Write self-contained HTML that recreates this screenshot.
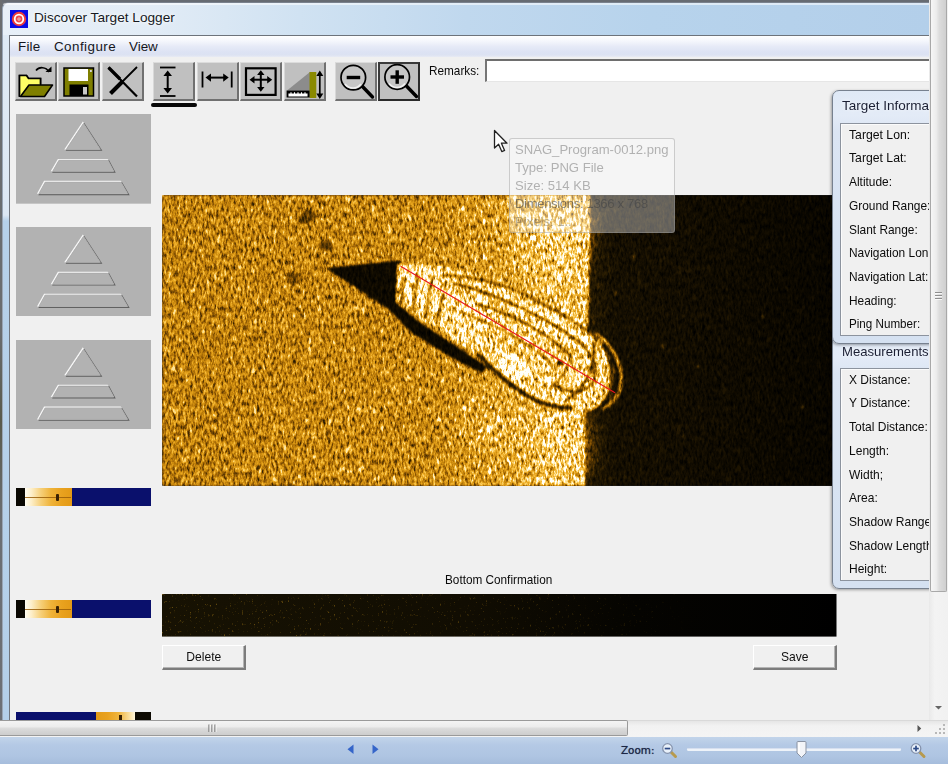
<!DOCTYPE html>
<html lang="en">
<head>
<meta charset="utf-8">
<title>Discover Target Logger</title>
<style>
html,body{margin:0;padding:0;}
body{width:948px;height:764px;overflow:hidden;position:relative;background:#f0f0f0;font-family:"Liberation Sans",sans-serif;color:#000;}
.abs{position:absolute;}
#outer-top{left:0;top:0;width:948px;height:2px;background:#666b72;}
#outer-left{left:0;top:0;width:2px;height:720px;background:linear-gradient(#6a6d70 0,#6a6d70 330px,#595a4c 420px,#6b6e72 520px,#6d7076 720px);}
#frame{left:0;top:0;width:932px;height:722px;background:#6a6f76;}
#frame2{left:2px;top:2px;width:930px;height:720px;background:#b7d1ea;border-top-left-radius:7px;border-top:1px solid #7a828e;border-left:1px solid #99a5b5;box-sizing:border-box;}
#titlebar{left:3px;top:3px;width:927px;height:32px;border-top-left-radius:6px;background:linear-gradient(90deg,#e8f0f8 0,#e2ecf6 16%,#d0e2f2 32%,#c0d8ee 50%,#b7d3ec 70%,#b3cfea 100%);}
#titlebar .hl{left:0;top:0;width:100%;height:2px;background:rgba(255,255,255,.55);border-top-left-radius:6px;}
#leftborder{left:3px;top:35px;width:6px;height:685px;background:linear-gradient(#dfeaf5 0,#dde8f4 180px,#b6d1ea 186px,#b4cfe9 100%);}
#title{left:34px;top:8px;font-size:13.65px;line-height:20px;color:#16191e;white-space:nowrap;text-shadow:0 0 6px #fff,0 0 3px rgba(255,255,255,.8);}
#client{left:9px;top:35px;width:921px;height:686px;background:#f0f0f0;border-left:1px solid #70757d;border-top:1px solid #6d737b;box-sizing:border-box;}
#menubar{left:10px;top:36px;width:920px;height:21px;background:linear-gradient(#ffffff 0,#f4f6fc 25%,#e6eaf7 50%,#dde3f4 75%,#dce2f2 90%,#e8ebf4 100%);}
.menu{top:38.4px;font-size:13.4px;line-height:18px;color:#14161c;white-space:nowrap;}
/* toolbar */
.tb{top:62px;width:42px;height:39px;background:#c0c0c0;box-sizing:border-box;border-top:1px solid #dcdcdc;border-left:1px solid #d8d8d8;border-right:2px solid #707070;border-bottom:2px solid #707070;}
.tb svg{position:absolute;left:0;top:0;}
.tb.sel{border:2px solid #2a2a2a;border-top-color:#3a3a3a;border-left-color:#3a3a3a;}
#uline{left:151px;top:103px;width:46px;height:4px;background:#080808;border-radius:2px;}
.lbl{font-size:13px;line-height:14px;white-space:nowrap;color:#0a0a0a;transform:scaleX(.905);transform-origin:0 50%;}
#remarks-in{left:485px;top:59px;width:446px;height:23px;background:#fff;box-sizing:border-box;border-top:2px solid #6e6e6e;border-left:2px solid #767676;border-bottom:1px solid #e6e6e6;}
/* thumbs */
.thumb{left:16px;width:135px;height:90px;background:#b2b2b2;}
.strip{left:16px;width:135px;height:18px;background:#0a106c;overflow:hidden;}
/* panels */
.panel{left:832px;width:110px;box-sizing:border-box;border:1px solid #77818f;border-radius:7px;background:linear-gradient(#dfe9f6 0,#e3ebf7 24px,#dbe5f3 40px,#d5e1f1 100%);box-shadow:-1px 1px 3px rgba(0,0,0,.35);}
.panel .ptitle{position:absolute;left:9px;font-size:13.5px;line-height:16px;color:#1b1f33;white-space:nowrap;text-shadow:0 0 5px #fff;}
.panel .inner{position:absolute;left:7px;right:0;background:#f0f0f0;border:1px solid #8c939e;border-right:none;box-shadow:inset 1px 1px 0 #fbfbfb;}
.panel .row{position:absolute;left:8px;font-size:13px;line-height:14px;white-space:nowrap;color:#0c0c0c;transform:scaleX(.94);transform-origin:0 50%;}
/* classic buttons */
.btn{height:25px;width:84px;box-sizing:border-box;background:#f0f0f0;border-top:1px solid #fff;border-left:1px solid #fff;border-right:2px solid #7c7c7c;border-bottom:2px solid #7c7c7c;text-align:center;font-size:13px;line-height:21px;color:#111;box-shadow:inset -1px -1px 0 #b4b4b4;}
.tiptxt{font-size:13.1px;line-height:18px;white-space:nowrap;color:rgba(120,120,120,.55);}
/* scrollbars */
#vscroll{left:929px;top:0;width:19px;height:720px;background:linear-gradient(90deg,#e9e9e9 0,#f3f3f3 30%,#f1f1f1 100%);}
#vthumb{left:930px;top:0;width:17px;height:592px;box-sizing:border-box;border:1px solid #a8a8a8;border-top:none;border-radius:0 0 2px 2px;background:linear-gradient(90deg,#f6f6f6 0,#ececec 35%,#dcdcdc 55%,#cfcfcf 100%);}
#hscroll{left:0;top:720px;width:948px;height:17px;background:linear-gradient(#e6e6e6 0,#f2f2f2 30%,#f4f4f4 100%);border-top:1px solid #d9d9d9;box-sizing:border-box;}
#hthumb{left:0;top:720px;width:628px;height:16px;box-sizing:border-box;border:1px solid #9a9a9a;border-left:none;border-radius:0 2px 2px 0;background:linear-gradient(#f4f4f4 0,#ececec 40%,#dadada 55%,#cdcdcd 100%);}
#status{left:0;top:737px;width:948px;height:27px;background:linear-gradient(#c2d4ea 0,#b4c9e5 30%,#afc5e2 70%,#a6bddc 100%);}
#zoomlbl{left:621px;top:743px;font-family:"DejaVu Sans",sans-serif;font-size:10.4px;line-height:14px;color:#1c2746;white-space:nowrap;text-shadow:0 0 .7px rgba(28,39,70,.8);}
</style>
</head>
<body>
<div class="abs" id="frame"></div><div class="abs" id="frame2"></div>
<div class="abs" id="outer-top"></div>
<div class="abs" id="outer-left"></div>
<div class="abs" id="titlebar"><div class="abs hl"></div></div>
<div class="abs" id="leftborder"></div>
<div class="abs" id="client"></div>
<div class="abs" id="menubar"></div>

<!-- app icon -->
<svg class="abs" style="left:10px;top:10px" width="18" height="18" viewBox="0 0 18 18">
  <rect width="18" height="18" fill="#0a0ae6"/>
  <circle cx="9" cy="9" r="7.2" fill="#ee3a3a"/>
  <circle cx="9" cy="9" r="5.2" fill="#fff"/>
  <circle cx="9" cy="9" r="3.4" fill="#f04a4a"/>
  <circle cx="9" cy="9" r="1.5" fill="#fff"/>
  <circle cx="9" cy="9" r=".8" fill="#d02020"/>
</svg>
<div class="abs" id="title">Discover Target Logger</div>

<div class="abs menu" style="left:18px;letter-spacing:.2px">File</div>
<div class="abs menu" style="left:54px;letter-spacing:.45px">Configure</div>
<div class="abs menu" style="left:129px">View</div>

<!-- TOOLBAR -->
<div class="abs tb" style="left:15px" id="tb-open"></div>
<div class="abs tb" style="left:58px" id="tb-save"></div>
<div class="abs tb" style="left:102px" id="tb-del"></div>
<div class="abs tb" style="left:153px" id="tb-v"></div>
<div class="abs tb" style="left:197px" id="tb-h"></div>
<div class="abs tb" style="left:240px" id="tb-move"></div>
<div class="abs tb" style="left:284px" id="tb-ruler"></div>
<div class="abs tb" style="left:335px" id="tb-zo"></div>
<div class="abs tb sel" style="left:378px" id="tb-zi"></div>
<div class="abs" id="uline"></div>
<svg class="abs" style="left:0;top:58px" width="430" height="52" viewBox="0 58 430 52">
  <!-- open folder -->
  <g>
    <path d="M19.5,96.5 V75.5 H26.5 L28.5,78.5 H40.5 V85" fill="#ffff66" stroke="#000" stroke-width="1.6" stroke-linejoin="miter"/>
    <path d="M19.5,96.5 L19.5,76 L27,76 L29,79 L40,79 L40,85 L29,85 L21,96.5 Z" fill="#ffff66"/>
    <path d="M20.5,96.5 L29,85 H52.5 L44.5,96.5 Z" fill="#7f7f00" stroke="#000" stroke-width="1.6" stroke-linejoin="round"/>
    <path d="M19.5,97 V75.5 H26.5 L28.5,78.5 H40.5 V84.5" fill="none" stroke="#000" stroke-width="1.7"/>
    <path d="M36,70.5 C39,66.5 46,66.5 49,72" fill="none" stroke="#000" stroke-width="1.6"/>
    <path d="M45.5,72 H51.5 V66.5 Z" fill="#000"/>
  </g>
  <!-- save -->
  <g>
    <rect x="64" y="68" width="29.5" height="28" fill="#7f7f00" stroke="#000" stroke-width="1.5"/>
    <rect x="68.5" y="69" width="19.5" height="12" fill="#fff"/>
    <rect x="69.5" y="84.5" width="19" height="11.5" fill="#000"/>
    <rect x="83" y="87" width="4" height="7.5" fill="#c8c8c8"/>
    <rect x="90" y="70" width="1.8" height="2" fill="#d8d8d8"/>
  </g>
  <!-- X -->
  <g stroke="#000" stroke-linecap="butt" fill="none">
    <path d="M108.5,67.5 L137,96.5" stroke-width="2.2"/>
    <path d="M137,67 L122,82" stroke-width="1.8"/>
    <path d="M123,81 L110.5,93.5" stroke-width="4"/>
    <path d="M108.5,67.5 L120,79" stroke-width="3.2"/>
  </g>
  <!-- vertical measure -->
  <g stroke="#000" fill="#000">
    <line x1="160" y1="67.5" x2="175.5" y2="67.5" stroke-width="1.8"/>
    <line x1="160" y1="96" x2="175.5" y2="96" stroke-width="1.8"/>
    <line x1="167.7" y1="73" x2="167.7" y2="91" stroke-width="2"/>
    <path d="M167.7,70.5 L172,76 H163.4 Z M167.7,93.5 L172,88 H163.4 Z" stroke="none"/>
  </g>
  <!-- horizontal measure -->
  <g stroke="#000" fill="#000">
    <line x1="202.5" y1="71.5" x2="202.5" y2="87.5" stroke-width="1.8"/>
    <line x1="231.7" y1="71.5" x2="231.7" y2="87.5" stroke-width="1.8"/>
    <line x1="208" y1="77.6" x2="226" y2="77.6" stroke-width="2"/>
    <path d="M205.5,77.6 L211,73.4 V81.8 Z M228.7,77.6 L223.2,73.4 V81.8 Z" stroke="none"/>
  </g>
  <!-- move -->
  <g stroke="#000" fill="#000">
    <rect x="246" y="68.3" width="29.6" height="26.6" fill="none" stroke-width="2.2"/>
    <line x1="252" y1="79.7" x2="270" y2="79.7" stroke-width="2"/>
    <line x1="260.8" y1="72" x2="260.8" y2="90" stroke-width="2"/>
    <path d="M249.5,79.7 L254.5,76 V83.4 Z M272.2,79.7 L267.2,76 V83.4 Z M260.8,70.3 L264.5,75 H257.1 Z M260.8,91.8 L264.5,87 H257.1 Z" stroke="none"/>
  </g>
  <!-- ruler / height -->
  <g>
    <path d="M287,90.5 L310,72 V90.5 Z" fill="#8c8c8c"/>
    <rect x="309.5" y="72" width="6.8" height="26" fill="#8a8a00"/>
    <rect x="286.6" y="90.5" width="23" height="7" fill="#000"/>
    <path d="M289,94 h18 v2 h-18 z M291,92.3 v2 M294.5,92.3 v2 M298,92.3 v2 M301.5,92.3 v2 M305,92.3 v2" fill="#fff" stroke="#fff" stroke-width="1.1"/>
    <line x1="319.8" y1="74" x2="319.8" y2="96" stroke="#000" stroke-width="1.7"/>
    <path d="M319.8,70.5 L323.3,76 H316.3 Z M319.8,99 L323.3,93.5 H316.3 Z" fill="#000"/>
  </g>
  <!-- zoom out -->
  <g>
    <line x1="362" y1="86" x2="372.5" y2="97" stroke="#000" stroke-width="3.4" stroke-linecap="round"/>
    <circle cx="353.3" cy="77.6" r="12.3" fill="#c6c6c6" stroke="#000" stroke-width="1.7"/>
    <path d="M345,84 A10,10 0 0 0 361,84" fill="none" stroke="#f4f4f4" stroke-width="1.6" opacity=".9"/>
    <rect x="346.7" y="75.8" width="13.5" height="3.4" fill="#000"/>
  </g>
  <!-- zoom in -->
  <g>
    <line x1="406" y1="85.5" x2="416.5" y2="96.5" stroke="#000" stroke-width="3.4" stroke-linecap="round"/>
    <circle cx="397.2" cy="77" r="12.3" fill="#c6c6c6" stroke="#000" stroke-width="1.7"/>
    <path d="M389,83.5 A10,10 0 0 0 405,83.5" fill="none" stroke="#f4f4f4" stroke-width="1.6" opacity=".9"/>
    <rect x="390.5" y="75.3" width="13.5" height="3.4" fill="#000"/>
    <rect x="395.5" y="70.3" width="3.4" height="13.5" fill="#000"/>
  </g>
</svg>


<div class="abs lbl" style="left:429px;top:64px">Remarks:</div>
<div class="abs" id="remarks-in"></div>

<!-- THUMBS -->
<svg width="0" height="0" style="position:absolute"><defs>
  <g id="pyrshape"><path d="M67.5,9.5 L84.3,35.5 H50.3 Z"/><path d="M43,46.5 H92 L97.8,57.5 H36.7 Z"/><path d="M29.2,68.5 H105 L111.7,80 H22.9 Z"/></g>
</defs></svg>
<svg class="abs" style="left:16px;top:114.2px" width="135" height="89.7" viewBox="0 0 135 90" preserveAspectRatio="none">
  <rect width="135" height="90" fill="#b2b2b2"/>
  <g fill="none" stroke-linejoin="miter">
    <g stroke="#f6f6f6" stroke-width="1.5" transform="translate(-0.7 -0.7)"><use href="#pyrshape"/></g>
    <g stroke="#5e5e5e" stroke-width="1.5" transform="translate(0.7 0.7)"><use href="#pyrshape"/></g>
    <g stroke="#b2b2b2" stroke-width="0.9" fill="#b2b2b2"><use href="#pyrshape"/></g>
  </g>
</svg>
<svg class="abs" style="left:16px;top:226.9px" width="135" height="89.5" viewBox="0 0 135 90" preserveAspectRatio="none">
  <rect width="135" height="90" fill="#b2b2b2"/>
  <g fill="none" stroke-linejoin="miter">
    <g stroke="#f6f6f6" stroke-width="1.5" transform="translate(-0.7 -0.7)"><use href="#pyrshape"/></g>
    <g stroke="#5e5e5e" stroke-width="1.5" transform="translate(0.7 0.7)"><use href="#pyrshape"/></g>
    <g stroke="#b2b2b2" stroke-width="0.9" fill="#b2b2b2"><use href="#pyrshape"/></g>
  </g>
</svg>
<svg class="abs" style="left:16px;top:339.5px" width="135" height="89.3" viewBox="0 0 135 90" preserveAspectRatio="none">
  <rect width="135" height="90" fill="#b2b2b2"/>
  <g fill="none" stroke-linejoin="miter">
    <g stroke="#f6f6f6" stroke-width="1.5" transform="translate(-0.7 -0.7)"><use href="#pyrshape"/></g>
    <g stroke="#5e5e5e" stroke-width="1.5" transform="translate(0.7 0.7)"><use href="#pyrshape"/></g>
    <g stroke="#b2b2b2" stroke-width="0.9" fill="#b2b2b2"><use href="#pyrshape"/></g>
  </g>
</svg>
<div class="abs strip" style="top:488px"><div class="abs" style="left:0;top:0;width:9px;height:18px;background:#0a0802"></div><div class="abs" style="left:8.5px;top:0;width:47px;height:18px;background:linear-gradient(90deg,#fffdf2 0,#fdeec8 14%,#f6cf78 34%,#efb33a 55%,#e9a21f 78%,#e39a16 100%)"></div><div class="abs" style="left:9px;top:9px;width:46px;height:1.4px;background:#9a5e08;opacity:.85"></div><div class="abs" style="left:40px;top:6px;width:2.5px;height:7px;background:#3a2204;border-radius:1px"></div></div>
<div class="abs strip" style="top:600px"><div class="abs" style="left:0;top:0;width:9px;height:18px;background:#0a0802"></div><div class="abs" style="left:8.5px;top:0;width:47px;height:18px;background:linear-gradient(90deg,#fffdf2 0,#fdeec8 14%,#f6cf78 34%,#efb33a 55%,#e9a21f 78%,#e39a16 100%)"></div><div class="abs" style="left:9px;top:9px;width:46px;height:1.4px;background:#9a5e08;opacity:.85"></div><div class="abs" style="left:40px;top:6px;width:2.5px;height:7px;background:#3a2204;border-radius:1px"></div></div>
<div class="abs strip" style="top:712px;height:8px"><div class="abs" style="left:80px;top:0;width:39px;height:8px;background:linear-gradient(90deg,#e39a16 0,#e9a21f 30%,#f0b640 60%,#fbe2a6 88%,#fff6dc 100%)"></div><div class="abs" style="left:103px;top:3px;width:3px;height:5px;background:#3a2204"></div><div class="abs" style="left:119px;top:0;width:16px;height:8px;background:#0d0a02"></div></div>

<!-- MAIN IMAGE placeholder -->
<svg class="abs" id="sonar" style="left:162px;top:195px" width="675" height="291" viewBox="0 0 675 291">
  <defs>
    <filter id="sonarf" x="0" y="0" width="675" height="291" filterUnits="userSpaceOnUse" color-interpolation-filters="sRGB">
      <feGaussianBlur in="SourceGraphic" stdDeviation="0.9" result="base"/>
      <feTurbulence type="fractalNoise" baseFrequency="0.42 0.17" numOctaves="3" seed="7" result="n"/>
      <feColorMatrix in="n" type="matrix" values="1.3 0 0 0 -0.15  1.3 0 0 0 -0.15  1.3 0 0 0 -0.15  0 0 0 0 1" result="ng"/>
      <feTurbulence type="fractalNoise" baseFrequency="0.2 0.1" numOctaves="2" seed="11" result="n2"/>
      <feColorMatrix in="n2" type="matrix" values="5 0 0 0 -3.25  5 0 0 0 -3.25  5 0 0 0 -3.25  0 0 0 0 1" result="sp"/>
      <feColorMatrix in="n2" type="matrix" values="0 -4 0 0 1.5  0 -4 0 0 1.5  0 -4 0 0 1.5  0 0 0 0 1" result="dk"/>
      <feComposite in="ng" in2="sp" operator="arithmetic" k1="0" k2="1" k3="0.55" k4="0" result="ng2"/>
      <feComposite in="ng2" in2="dk" operator="arithmetic" k1="0" k2="1" k3="-0.22" k4="0" result="ng3"/>
      <feComposite in="base" in2="ng3" operator="arithmetic" k1="1.5" k2="0.28" k3="0" k4="-0.02" result="mix"/>
      <feComponentTransfer in="mix">
        <feFuncR type="table" tableValues="0 0.16 0.37 0.59 0.78 0.91 0.98 1 1"/>
        <feFuncG type="table" tableValues="0 0.11 0.23 0.37 0.525 0.65 0.78 0.92 1"/>
        <feFuncB type="table" tableValues="0 0.01 0.01 0.02 0.05 0.12 0.31 0.67 0.98"/>
      </feComponentTransfer>
    </filter>
    <filter id="soft" x="-50%" y="-50%" width="200%" height="200%"><feGaussianBlur stdDeviation="10"/></filter>
    <linearGradient id="seabed" x1="0" x2="1" y1="0" y2="0">
      <stop offset="0" stop-color="#7c7c7c"/>
      <stop offset="0.6" stop-color="#838383"/>
      <stop offset="0.74" stop-color="#989898"/>
      <stop offset="0.88" stop-color="#b8b8b8"/>
      <stop offset="1" stop-color="#c4c4c4"/>
    </linearGradient>
    <linearGradient id="water" x1="0" x2="1" y1="0" y2="0">
      <stop offset="0" stop-color="#242424"/>
      <stop offset="0.12" stop-color="#161616"/>
      <stop offset="1" stop-color="#0c0c0c"/>
    </linearGradient>
  </defs>
  <g filter="url(#sonarf)">
    <rect width="675" height="291" fill="url(#water)"/>
    <rect x="420" width="255" height="291" fill="url(#water)"/>
    <!-- seabed with curved boundary -->
    <path d="M0,0 H428 C428,50 427,100 425,138 C432,144 441,152 446,165 C450,180 449,196 442,206 C436,213 428,216 423,217 C423,240 424,265 423,291 H0 Z" fill="url(#seabed)"/>
    <!-- brighter patches near nadir -->
    <g opacity="0.5">
      <ellipse cx="392" cy="40" rx="34" ry="40" fill="#d8d8d8" filter="url(#soft)"/>
      <ellipse cx="400" cy="250" rx="26" ry="36" fill="#cfcfcf" filter="url(#soft)"/>
      <ellipse cx="330" cy="232" rx="30" ry="22" fill="#c0c0c0" filter="url(#soft)"/>
    </g>
    <!-- faint horizontal scan line -->
    <rect x="0" y="141.5" width="236" height="1.6" fill="#585858" opacity=".55"/>
    <!-- small dark blobs -->
    <ellipse cx="145" cy="22" rx="9" ry="6" fill="#363636" opacity=".85" transform="rotate(-20 145 22)"/>
    <ellipse cx="164" cy="51" rx="7" ry="5.5" fill="#363636" opacity=".85"/>
    <ellipse cx="132" cy="84" rx="8" ry="5.5" fill="#3a3a3a" opacity=".75"/>
    <!-- shadow -->
    <path d="M164,73 L239,65 L236,109 L256,126 L300,155 L326,172 L320,178 L288,162 L250,138 L226,114 Z" fill="#101010"/>
    <!-- hull -->
    <g transform="translate(345.5 134.5) rotate(30.6)">
      <path d="M-128,0 C-100,-20 -60,-34 0,-39 C50,-42 84,-41 98,-32 C111,-20 114,6 108,21 C103,31 97,35 90,37 C80,44 66,47 50,46 C30,45 10,40 -10,36 C-50,35 -95,35 -110,33 Z" fill="#cbcbcb"/>
      <!-- bright zones -->
      <ellipse cx="-92" cy="8" rx="26" ry="16" fill="#ececec" opacity=".85"/>
      <ellipse cx="24" cy="29" rx="18" ry="11" fill="#ffffff" opacity=".95"/>
      <ellipse cx="40" cy="-24" rx="50" ry="9" fill="#ededed" opacity=".7"/>
      <ellipse cx="93" cy="8" rx="10" ry="13" fill="#f0f0f0" opacity=".75"/>
      <ellipse cx="-30" cy="6" rx="30" ry="8" fill="#e6e6e6" opacity=".6"/>
      <!-- dark ribs near bow -->
      <g stroke="#282828" stroke-width="3" opacity=".75">
        <line x1="-116" y1="8" x2="-104" y2="32"/>
        <line x1="-106" y1="-2" x2="-90" y2="33"/>
        <line x1="-92" y1="-8" x2="-76" y2="33"/>
        <line x1="-78" y1="-10" x2="-64" y2="30"/>
      </g>
      <!-- outlines and inner structure -->
      <path d="M-84,-13 C-60,-28 -30,-36 0,-39 C50,-42 84,-41 98,-32" fill="none" stroke="#3a3a3a" stroke-width="3" opacity=".8"/>
      <path d="M-70,-12 C-30,-25 30,-30 66,-26 C90,-22 100,-10 100,4 C98,18 86,24 66,24" fill="none" stroke="#2a2a2a" stroke-width="3.2" opacity=".85"/>
      <path d="M-40,-6 C0,-17 40,-17 70,-9" fill="none" stroke="#303030" stroke-width="3.2" opacity=".8"/>
      <path d="M-50,9 C-10,1 30,1 64,9" fill="none" stroke="#383838" stroke-width="2.8" opacity=".7"/>
      <path d="M-20,16 C0,12 20,12 40,16" fill="none" stroke="#404040" stroke-width="2.5" opacity=".55"/>
      <path d="M-14,36 C10,42 30,47 52,47 C70,47 84,42 96,34" fill="none" stroke="#181818" stroke-width="4.5" opacity=".9"/>
      <path d="M80,-33 C95,-17 98,10 86,33" fill="none" stroke="#262626" stroke-width="3.2" opacity=".85"/>
      <path d="M60,-21 C72,-8 74,12 66,30" fill="none" stroke="#343434" stroke-width="2.6" opacity=".65"/>
      <circle cx="62" cy="2" r="3" fill="#1c1c1c"/>
    </g>
    <!-- stern ring protruding into the water column -->
    <path d="M434,139 C446,146 456,160 459,178 C461,194 455,206 441,214" fill="none" stroke="#9a9a9a" stroke-width="2.6"/>
    <path d="M440,150 C448,158 452,172 452,184 C451,196 447,204 440,209" fill="none" stroke="#1a1a1a" stroke-width="4" opacity=".85"/>
    <path d="M447,160 L443,204 M452,170 L448,208" stroke="#6a6a6a" stroke-width="1.3" fill="none" opacity=".8"/>
    <ellipse cx="437" cy="147" rx="5" ry="4" fill="#8a8a8a" opacity=".8"/>
    <!-- specks in water column -->
    <g fill="#5a5a5a">
      <rect x="453" y="97" width="1.2" height="4"/><rect x="384" y="290" width="1.2" height="4"/>
      <rect x="535" y="170" width="1.2" height="3"/><rect x="600" y="120" width="1.2" height="3"/>
      <rect x="500" y="150" width="1.2" height="3"/><rect x="640" y="210" width="1.2" height="3"/>
      <rect x="470" y="60" width="1.2" height="3"/><rect x="520" y="240" width="1.2" height="3"/>
      <rect x="418" y="192" width="1.2" height="3"/>
    </g>
  </g>
  <!-- measurement line -->
  <line x1="238.6" y1="71.3" x2="453" y2="197.8" stroke="#e8141c" stroke-width="1.1"/>
</svg>


<div class="abs lbl" style="left:445px;top:573px">Bottom Confirmation</div>
<svg class="abs" id="bottomstrip" style="left:162px;top:594.4px" width="674.5" height="42.6" viewBox="0 0 675 43" preserveAspectRatio="none">
  <defs>
    <linearGradient id="bsg" x1="0" x2="1" y1="0" y2="0"><stop offset="0" stop-color="#171203"/><stop offset=".45" stop-color="#110d02"/><stop offset=".7" stop-color="#050401"/><stop offset="1" stop-color="#000"/></linearGradient>
    <filter id="bsn" x="0" y="0" width="675" height="43" filterUnits="userSpaceOnUse" color-interpolation-filters="sRGB">
      <feTurbulence type="fractalNoise" baseFrequency="0.5 0.3" numOctaves="2" seed="5" result="t"/>
      <feColorMatrix in="t" type="matrix" values="0 0 0 0 0.75  0 0 0 0 0.55  0 0 0 0 0.1  6 0 0 0 -4.05"/>
    </filter>
    <linearGradient id="bsm" x1="0" x2="1" y1="0" y2="0"><stop offset="0" stop-color="#fff" stop-opacity=".5"/><stop offset=".6" stop-color="#fff" stop-opacity=".25"/><stop offset=".8" stop-color="#fff" stop-opacity="0"/></linearGradient>
    <mask id="bsmask"><rect width="675" height="43" fill="url(#bsm)"/></mask>
  </defs>
  <rect width="675" height="43" fill="url(#bsg)"/>
  <g mask="url(#bsmask)"><rect width="675" height="43" filter="url(#bsn)"/></g>
</svg>
<div class="abs btn" style="left:162px;top:645px"><span style="display:inline-block;transform:scaleX(.93)">Delete</span></div>
<div class="abs btn" style="left:753px;top:645px"><span style="display:inline-block;transform:scaleX(.93)">Save</span></div>


<!-- TOOLTIP (faded) -->
<div class="abs" id="tip" style="left:509px;top:138px;width:166px;height:95px;box-sizing:border-box;border:1px solid rgba(150,150,150,.45);border-radius:3px;background:rgba(255,255,255,.36);"></div>
<div class="abs tiptxt" style="left:515px;top:141px">SNAG_Program-0012.png</div>
<div class="abs tiptxt" style="left:515px;top:159px">Type: PNG File</div>
<div class="abs tiptxt" style="left:515px;top:177px">Size: 514 KB</div>
<div class="abs tiptxt" style="left:515px;top:195px;color:rgba(70,70,70,.62);letter-spacing:-.35px">Dimensions: 1366 x 768</div>
<div class="abs tiptxt" style="left:515px;top:213px;color:rgba(120,110,90,.5)">Pixels: 1...</div>
<!-- mouse cursor -->
<svg class="abs" style="left:492px;top:128px" width="20" height="28" viewBox="0 0 20 28">
  <path d="M2.5,2.5 V20 L6.6,16.2 L9.8,23.6 L12.6,22.4 L9.4,15.2 H15 Z" fill="#fff" stroke="#222" stroke-width="1.3" stroke-linejoin="round"/>
</svg>
<!-- PANELS -->
<div class="abs panel" id="p2" style="top:332px;height:257px">
  <div class="ptitle" style="top:11px;font-size:13.1px">Measurements</div>
  <div class="inner" style="top:35px;bottom:7px"><div class="row" style="top:3.6px;transform:scaleX(.925)">X Distance:</div><div class="row" style="top:27.3px;transform:scaleX(.925)">Y Distance:</div><div class="row" style="top:51.1px;transform:scaleX(.925)">Total Distance:</div><div class="row" style="top:74.8px;transform:scaleX(.925)">Length:</div><div class="row" style="top:98.5px;transform:scaleX(.925)">Width;</div><div class="row" style="top:122.2px;transform:scaleX(.925)">Area:</div><div class="row" style="top:146.0px;transform:scaleX(.925)">Shadow Range:</div><div class="row" style="top:169.7px;transform:scaleX(.925)">Shadow Length:</div><div class="row" style="top:193.4px;transform:scaleX(.925)">Height:</div></div>
</div>
<div class="abs panel" id="p1" style="top:90px;height:254px">
  <div class="ptitle" style="top:7px">Target Information</div>
  <div class="inner" style="top:32px;bottom:7px"><div class="row" style="top:3.7px;transform:scaleX(.94)">Target Lon:</div><div class="row" style="top:27.4px;transform:scaleX(.94)">Target Lat:</div><div class="row" style="top:51.1px;transform:scaleX(.915)">Altitude:</div><div class="row" style="top:74.8px;transform:scaleX(.915)">Ground Range:</div><div class="row" style="top:98.5px;transform:scaleX(.915)">Slant Range:</div><div class="row" style="top:122.2px;transform:scaleX(.915)">Navigation Lon:</div><div class="row" style="top:145.9px;transform:scaleX(.915)">Navigation Lat:</div><div class="row" style="top:169.6px;transform:scaleX(.915)">Heading:</div><div class="row" style="top:193.3px;transform:scaleX(.895)">Ping Number:</div></div>
</div>

<!-- SCROLLBARS / STATUS -->
<div class="abs" id="vscroll"></div>
<div class="abs" id="vthumb"></div>
<div class="abs" id="hscroll"></div>
<div class="abs" id="hthumb"></div>
<div class="abs" id="status"></div>
<div class="abs" id="zoomlbl">Zoom:</div>
<!-- scrollbar glyphs -->
<svg class="abs" style="left:929px;top:0" width="19" height="737" viewBox="0 0 19 737">
  <g stroke="#8f8f8f" stroke-width="1"><line x1="6" y1="292.5" x2="13" y2="292.5"/><line x1="6" y1="295.5" x2="13" y2="295.5"/><line x1="6" y1="298.5" x2="13" y2="298.5"/></g>
  <g stroke="#fff" stroke-width="1" opacity=".8"><line x1="6" y1="293.5" x2="13" y2="293.5"/><line x1="6" y1="296.5" x2="13" y2="296.5"/><line x1="6" y1="299.5" x2="13" y2="299.5"/></g>
  <path d="M6,706 H13 L9.5,709.6 Z" fill="#666"/>
  <g fill="#b8b8b8"><rect x="14" y="724" width="2" height="2"/><rect x="14" y="728" width="2" height="2"/><rect x="14" y="732" width="2" height="2"/><rect x="10" y="728" width="2" height="2"/><rect x="10" y="732" width="2" height="2"/><rect x="6" y="732" width="2" height="2"/></g>
</svg>
<svg class="abs" style="left:0;top:720px" width="929" height="17" viewBox="0 0 929 17">
  <g stroke="#6a6a6a" stroke-width="1.1"><line x1="209" y1="4.5" x2="209" y2="12"/><line x1="212" y1="4.5" x2="212" y2="12"/><line x1="215" y1="4.5" x2="215" y2="12"/></g>
  <g stroke="#fff" stroke-width="1" opacity=".8"><line x1="210" y1="4.5" x2="210" y2="12"/><line x1="213" y1="4.5" x2="213" y2="12"/><line x1="216" y1="4.5" x2="216" y2="12"/></g>
  <path d="M917.5,5 V12 L921.2,8.5 Z" fill="#555"/>
</svg>
<!-- status bar widgets -->
<svg class="abs" style="left:0;top:737px" width="948" height="27" viewBox="0 0 948 27">
  <path d="M353.5,7.5 V17 L347.5,12.2 Z" fill="#3565c9"/>
  <path d="M372.5,7.5 V17 L378.5,12.2 Z" fill="#3565c9"/>
  <!-- zoom out -->
  <line x1="671" y1="15" x2="675.5" y2="19.5" stroke="#b79a4e" stroke-width="3" stroke-linecap="round"/>
  <circle cx="667.5" cy="11.5" r="4.8" fill="#e9f1fa" stroke="#8593ad" stroke-width="1.3"/>
  <rect x="664.7" y="10.7" width="5.6" height="1.7" fill="#2d4a86"/>
  <!-- slider -->
  <rect x="687" y="11" width="214" height="3" rx="1.5" fill="#eef3f9"/>
  <rect x="687" y="11" width="214" height="1" fill="#d3dded" opacity=".9"/>
  <path d="M797,5.5 Q797,4.5 798,4.5 H805 Q806,4.5 806,5.5 V16 L801.5,20.5 L797,16 Z" fill="#f2f4f8" stroke="#8a93a3" stroke-width="1"/>
  <path d="M799,6 V16.5" stroke="#fff" stroke-width="1.5"/>
  <!-- zoom in -->
  <line x1="919.5" y1="15" x2="924" y2="19.5" stroke="#b79a4e" stroke-width="3" stroke-linecap="round"/>
  <circle cx="916" cy="11.5" r="4.8" fill="#e9f1fa" stroke="#8593ad" stroke-width="1.3"/>
  <rect x="913.2" y="10.7" width="5.6" height="1.7" fill="#2d4a86"/>
  <rect x="915.15" y="8.7" width="1.7" height="5.6" fill="#2d4a86"/>
</svg>

</body>
</html>
